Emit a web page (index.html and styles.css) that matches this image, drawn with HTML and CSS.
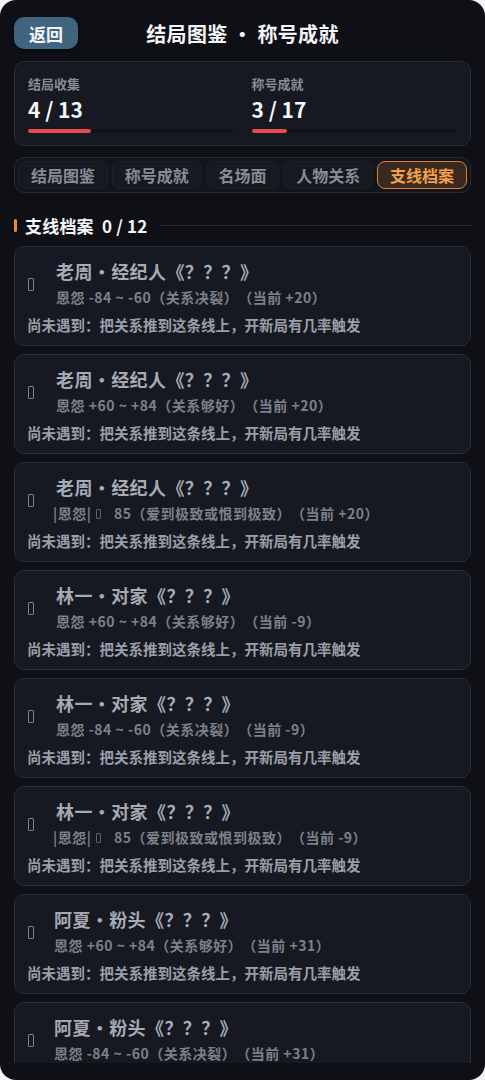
FILE: index.html
```html
<!DOCTYPE html>
<html lang="zh">
<head>
<meta charset="utf-8">
<link rel="stylesheet" href="styles.css">
</head>
<body>
<div class="app">
  <div class="header">
    <button class="back">返回</button>
    <div class="title">结局图鉴 · 称号成就</div>
  </div>

  <div class="stats">
    <div class="stat">
      <div class="stat-label">结局收集</div>
      <div class="stat-value">4 / 13</div>
      <div class="bar"><div class="fill" style="width:30.8%"></div></div>
    </div>
    <div class="stat">
      <div class="stat-label">称号成就</div>
      <div class="stat-value">3 / 17</div>
      <div class="bar"><div class="fill" style="width:17.6%"></div></div>
    </div>
  </div>

  <div class="tabs">
    <div class="tab">结局图鉴</div>
    <div class="tab">称号成就</div>
    <div class="tab">名场面</div>
    <div class="tab">人物关系</div>
    <div class="tab active">支线档案</div>
  </div>

  <div class="section">
    <span class="mark"></span>
    <span class="section-title">支线档案&nbsp; 0 / 12</span>
    <span class="rule"></span>
  </div>

  <div class="list">
    <div class="card">
      <div class="top"><span class="icon"><i class="tofu"></i></span>
        <div class="txt"><div class="name">老周・经纪人《？？？》</div>
        <div class="cond">恩怨 -84 ~ -60（关系决裂）（当前 +20）</div></div></div>
      <div class="hint">尚未遇到：把关系推到这条线上，开新局有几率触发</div>
    </div>
    <div class="card">
      <div class="top"><span class="icon"><i class="tofu"></i></span>
        <div class="txt"><div class="name">老周・经纪人《？？？》</div>
        <div class="cond">恩怨 +60 ~ +84（关系够好）（当前 +20）</div></div></div>
      <div class="hint">尚未遇到：把关系推到这条线上，开新局有几率触发</div>
    </div>
    <div class="card">
      <div class="top"><span class="icon"><i class="tofu"></i></span>
        <div class="txt"><div class="name">老周・经纪人《？？？》</div>
        <div class="cond shift">|恩怨|<i class="tofu small"></i> 85（爱到极致或恨到极致）（当前 +20）</div></div></div>
      <div class="hint">尚未遇到：把关系推到这条线上，开新局有几率触发</div>
    </div>
    <div class="card">
      <div class="top"><span class="icon"><i class="tofu"></i></span>
        <div class="txt"><div class="name">林一・对家《？？？》</div>
        <div class="cond">恩怨 +60 ~ +84（关系够好）（当前 -9）</div></div></div>
      <div class="hint">尚未遇到：把关系推到这条线上，开新局有几率触发</div>
    </div>
    <div class="card">
      <div class="top"><span class="icon"><i class="tofu"></i></span>
        <div class="txt"><div class="name">林一・对家《？？？》</div>
        <div class="cond">恩怨 -84 ~ -60（关系决裂）（当前 -9）</div></div></div>
      <div class="hint">尚未遇到：把关系推到这条线上，开新局有几率触发</div>
    </div>
    <div class="card">
      <div class="top"><span class="icon"><i class="tofu"></i></span>
        <div class="txt"><div class="name">林一・对家《？？？》</div>
        <div class="cond shift">|恩怨|<i class="tofu small"></i> 85（爱到极致或恨到极致）（当前 -9）</div></div></div>
      <div class="hint">尚未遇到：把关系推到这条线上，开新局有几率触发</div>
    </div>
    <div class="card">
      <div class="top"><span class="icon narrow"><i class="tofu"></i></span>
        <div class="txt"><div class="name">阿夏・粉头《？？？》</div>
        <div class="cond">恩怨 +60 ~ +84（关系够好）（当前 +31）</div></div></div>
      <div class="hint">尚未遇到：把关系推到这条线上，开新局有几率触发</div>
    </div>
    <div class="card">
      <div class="top"><span class="icon narrow"><i class="tofu"></i></span>
        <div class="txt"><div class="name">阿夏・粉头《？？？》</div>
        <div class="cond">恩怨 -84 ~ -60（关系决裂）（当前 +31）</div></div></div>
    </div>
  </div>
</div>
</body>
</html>
```

FILE: styles.css
```css
* { box-sizing: border-box; }
html, body { margin: 0; padding: 0; background: #f2f3f5; }
body {
  font-family: "Noto Sans CJK SC", "Noto Sans", sans-serif;
  text-spacing-trim: space-all;
  width: 485px;
  height: 1080px;
  overflow: hidden;
}
.app {
  width: 485px;
  height: 1080px;
  background: #0e1015;
  border-radius: 16px;
  padding: 16px 14px 17px;
  display: flex;
  flex-direction: column;
  overflow: hidden;
}
.header {
  position: relative;
  height: 34px;
  display: flex;
  align-items: center;
  justify-content: center;
  flex: none;
}
.back {
  position: absolute;
  left: 0;
  top: 1px;
  width: 64px;
  height: 32px;
  border: none;
  border-radius: 10px;
  background: #41657f;
  color: #f3f6f9;
  font-family: inherit;
  font-size: 17px;
  font-weight: 700;
  padding: 0;
  box-shadow: 0 2px 4px rgba(0,0,0,0.4);
}
.title {
  color: #f4f5f7;
  font-size: 20px;
  font-weight: 700;
  letter-spacing: 0.3px;
  margin-top: 1px;
}
.stats {
  margin-top: 11px;
  height: 85px;
  flex: none;
  background: #161921;
  border: 1px solid #2a2e38;
  border-radius: 10px;
  padding: 12px 14px 0 13px;
  display: grid;
  grid-template-columns: 1fr 1fr;
  column-gap: 19px;
}
.stat-label {
  color: #878b96;
  font-size: 13px;
  font-weight: 700;
  line-height: 20px;
}
.stat-value {
  color: #f5f6f8;
  font-size: 21px;
  font-weight: 700;
  line-height: 26px;
  margin-top: 2px;
}
.bar {
  margin-top: 7px;
  height: 4px;
  border-radius: 2px;
  background: #10131a;
}
.fill {
  height: 100%;
  border-radius: 2px;
  background: #e5484d;
}
.tabs {
  margin-top: 11px;
  height: 36px;
  flex: none;
  background: #12151c;
  border: 1px solid #262a33;
  border-radius: 10px;
  padding: 3px;
  display: flex;
  gap: 4px;
}
.tab {
  flex: 1 1 auto;
  display: flex;
  align-items: center;
  justify-content: center;
  border-radius: 8px;
  background: #161920;
  border: 1px solid #1c2028;
  color: #878b95;
  font-size: 16px;
  font-weight: 700;
}
.tab.active {
  background: #3a2a1d;
  border: 1.5px solid #d9813a;
  color: #f5a04f;
}
.section {
  margin-top: 22px;
  height: 20px;
  display: flex;
  align-items: center;
  flex: none;
}
.mark {
  width: 3px;
  height: 13px;
  border-radius: 2px;
  background: #ef8a3c;
  margin-right: 8px;
}
.section-title {
  color: #f5f6f8;
  font-size: 17px;
  font-weight: 700;
  white-space: nowrap;
  letter-spacing: 0.2px;
}
.rule {
  flex: 1;
  height: 1px;
  background: #262a33;
  margin-left: 12px;
}
.list {
  margin-top: 11px;
  flex: 1;
  min-height: 0;
  overflow: hidden;
  display: flex;
  flex-direction: column;
  gap: 8px;
}
.card {
  flex: none;
  height: 100px;
  background: #161921;
  border: 1px solid #2a2e38;
  border-radius: 10px;
  padding: 11px 12px 0 12px;
}
.top {
  display: flex;
  align-items: center;
}
.icon {
  width: 29px;
  flex: none;
  display: flex;
  align-items: center;
  padding-left: 1px;
  margin-top: 3px;
}
.icon.narrow { width: 27px; }
.tofu {
  display: inline-block;
  width: 6px;
  height: 13px;
  border: 1px solid #7c808a;
  border-radius: 1px;
}
.tofu.small {
  width: 5px;
  height: 10px;
  margin: 0 9px 0 5px;
  vertical-align: 0;
  border-color: #5e626c;
}
.name {
  color: #a6aab4;
  font-size: 18px;
  font-weight: 700;
  line-height: 26px;
  letter-spacing: 0.4px;
}
.cond {
  color: #7c808b;
  font-size: 14px;
  font-weight: 700;
  line-height: 20px;
  margin-top: 3px;
  letter-spacing: 0.5px;
}
.cond.shift { margin-left: -3px; }
.hint {
  color: #9a9ea8;
  font-size: 14.5px;
  font-weight: 700;
  line-height: 20px;
  margin-top: 8px;
}
```
